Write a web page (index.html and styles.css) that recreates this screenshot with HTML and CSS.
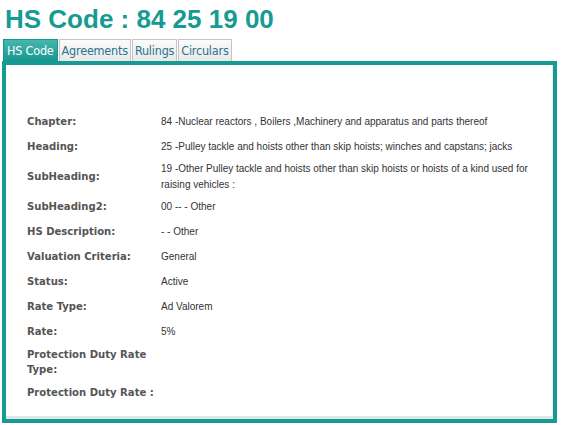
FILE: index.html
```html
<!DOCTYPE html>
<html>
<head>
<meta charset="utf-8">
<link rel="stylesheet" href="styles.css">
</head>
<body>
<h1 class="title">HS Code : 84 25 19 00</h1>
<div class="tabs">
  <div class="tab active">HS Code</div>
  <div class="tab">Agreements</div>
  <div class="tab">Rulings</div>
  <div class="tab">Circulars</div>
</div>
<div class="panel">
  <div class="inner">
    <div class="grid">
      <div class="label">Chapter:</div><div class="value">84 -Nuclear reactors , Boilers ,Machinery and apparatus and parts thereof</div>
      <div class="label">Heading:</div><div class="value">25 -Pulley tackle and hoists other than skip hoists; winches and capstans; jacks</div>
      <div class="label">SubHeading:</div><div class="value">19 -Other Pulley tackle and hoists other than skip hoists or hoists of a kind used for raising vehicles :</div>
      <div class="label">SubHeading2:</div><div class="value">00 -- - Other</div>
      <div class="label">HS Description:</div><div class="value">- - Other</div>
      <div class="label">Valuation Criteria:</div><div class="value">General</div>
      <div class="label">Status:</div><div class="value">Active</div>
      <div class="label">Rate Type:</div><div class="value">Ad Valorem</div>
      <div class="label">Rate:</div><div class="value">5%</div>
      <div class="label">Protection Duty Rate Type:</div><div class="value"></div>
      <div class="label">Protection Duty Rate :</div><div class="value"></div>
    </div>
  </div>
</div>
</body>
</html>
```
FILE: styles.css
```css
html, body { margin: 0; padding: 0; background: #fff; }
body { padding: 4px 0 0 2px; width: 555px; }
.title {
  margin: 0 0 0 3px;
  font-family: "Liberation Sans", Arial, sans-serif;
  font-weight: bold;
  font-size: 26px;
  line-height: 30px;
  color: #169b93;
}
.tabs { display: flex; gap: 1px; margin-top: 5px; padding-left: 1px; }
.tab {
  font-family: "DejaVu Sans Condensed", "DejaVu Sans", sans-serif;
  font-size: 12.5px;
  line-height: 21px;
  padding: 0 2px;
  color: #2a7390;
  background: linear-gradient(#fbfbfb, #e9e9e9);
  border: 1px solid #c4c4c4;
  border-bottom: none;
  letter-spacing: -0.2px;
}
.tab.active {
  color: #fff;
  background: linear-gradient(#45b6ae, #14968e);
  border-color: #14968e;
  padding: 0 3px 1px;
  margin-bottom: -1px;
}
.panel {
  border: 4px solid #169b93;
  height: 354px;
}
.inner {
  height: 100%;
  box-sizing: border-box;
  border-bottom: 3px solid #dfe8e8;
  border-right: 1px solid #e6eeee;
  padding: 44px 0 0 21px;
}
.grid {
  display: grid;
  grid-template-columns: 134px 380px;
}
.label {
  font-family: "DejaVu Sans Condensed", "DejaVu Sans", sans-serif;
  font-weight: bold;
  font-size: 11.2px;
  color: #555;
  line-height: 15px;
  min-height: 25px;
  box-sizing: border-box;
  padding: 3px 0;
  display: flex;
  align-items: center;
}
.value {
  font-family: "Liberation Sans", Arial, sans-serif;
  font-size: 10px;
  color: #333;
  line-height: 16px;
  padding: 2px 0 1px;
  display: flex;
  align-items: center;
}
```
